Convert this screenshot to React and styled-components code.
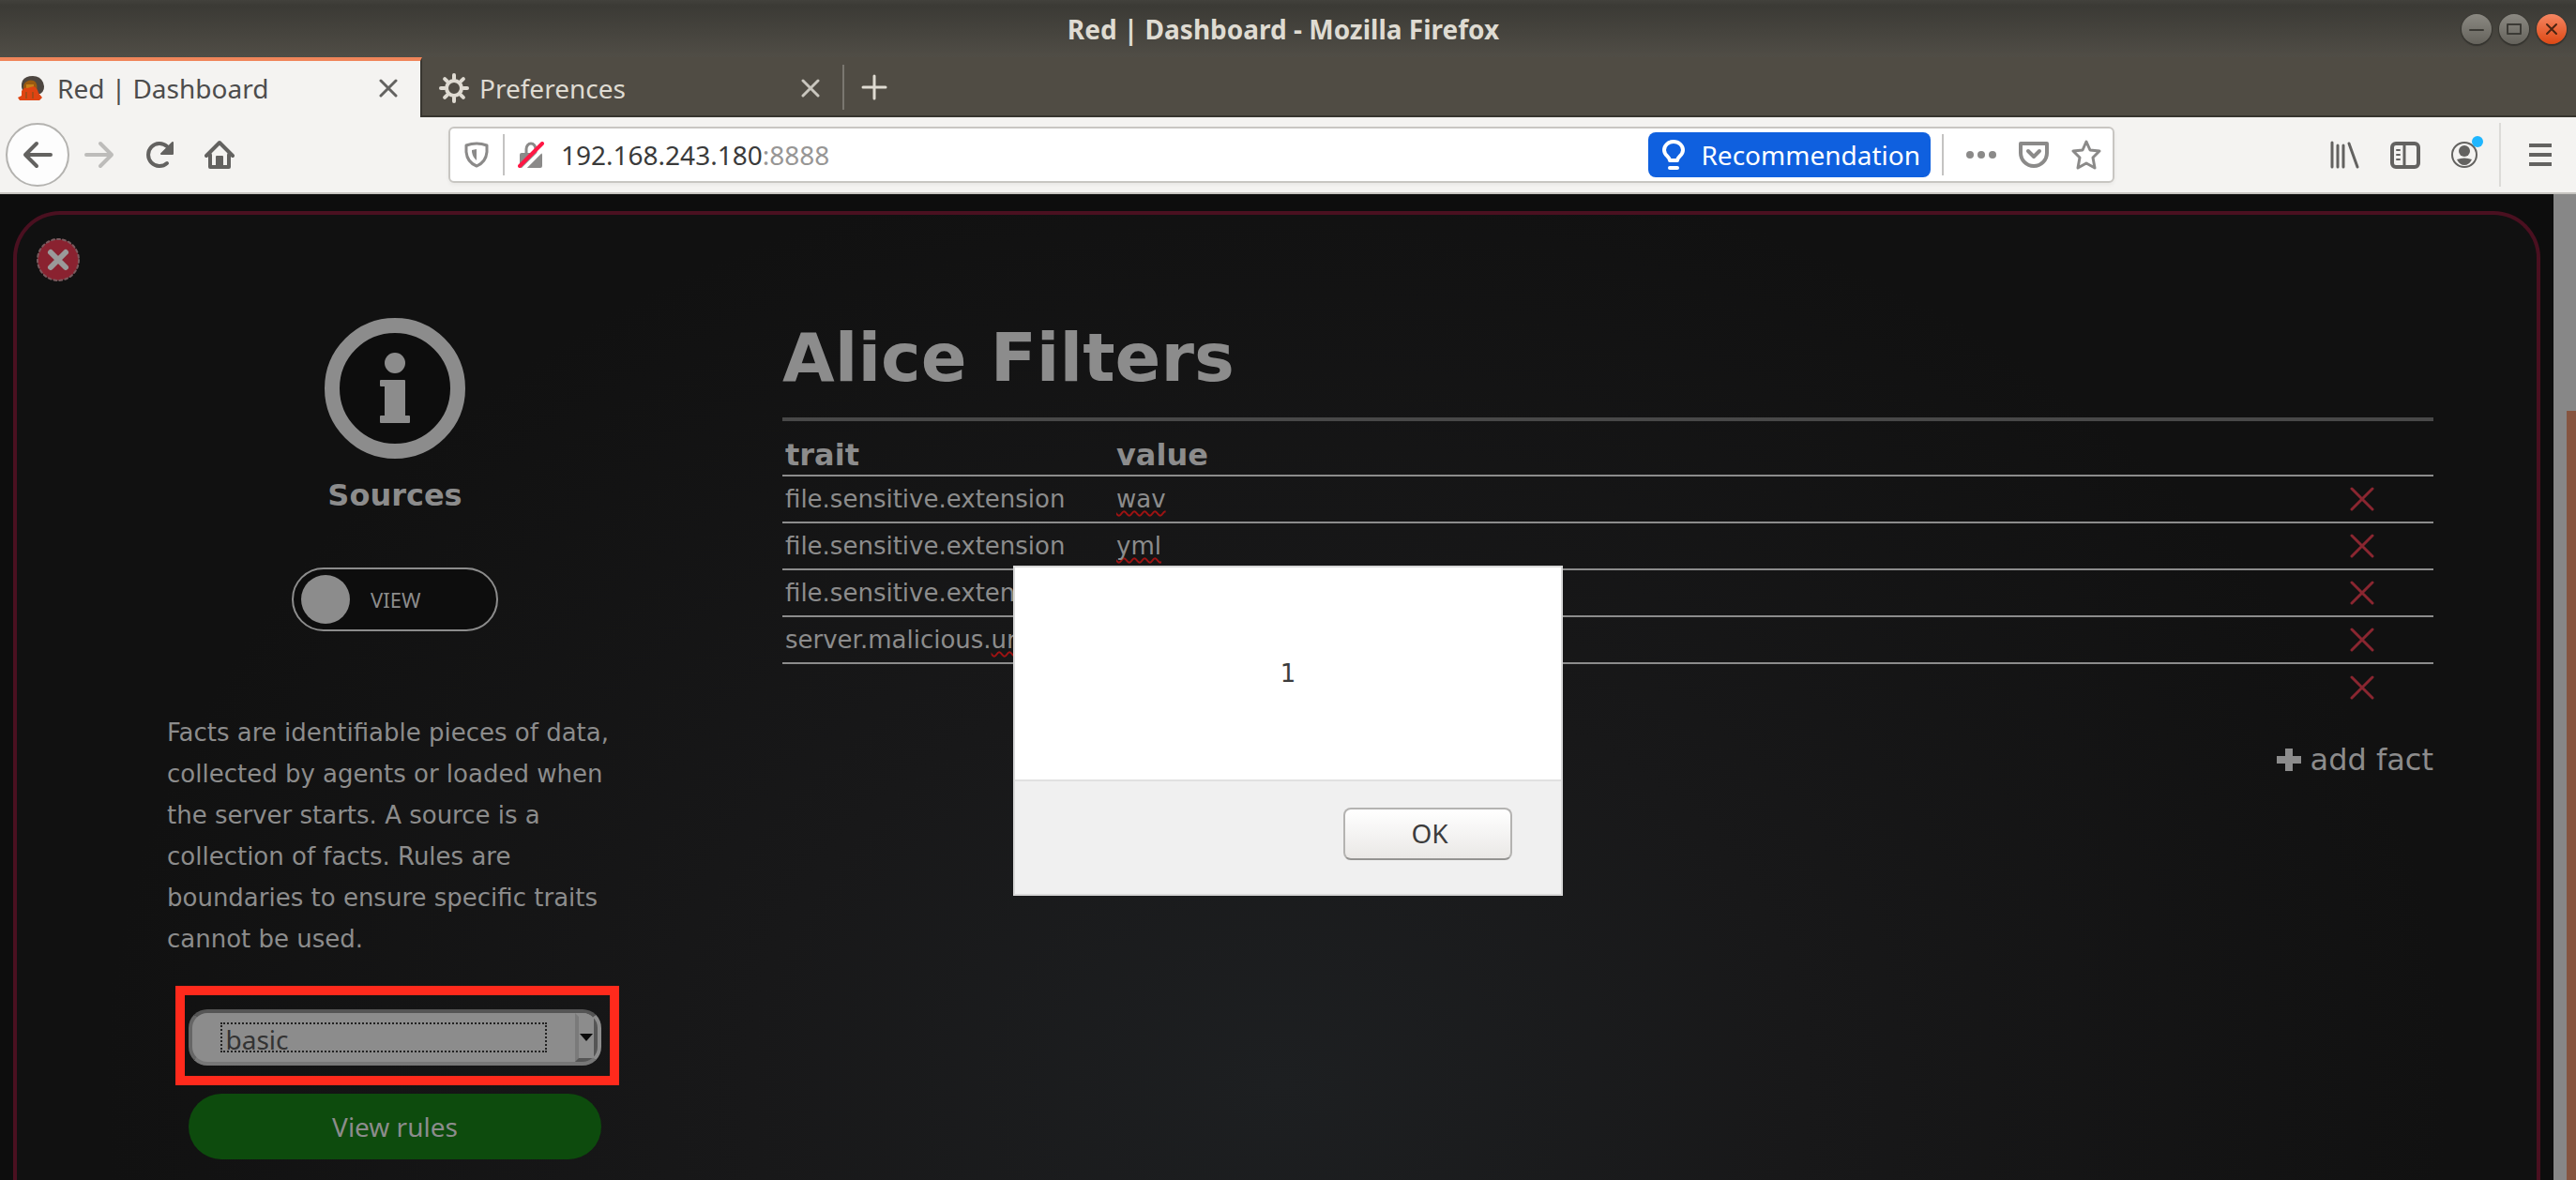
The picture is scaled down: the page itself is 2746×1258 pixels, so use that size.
import React from 'react';
import styled, { createGlobalStyle } from 'styled-components';

const ui = '"Noto Sans", "Open Sans", sans-serif';
const body = '"DejaVu Sans", sans-serif';

const GlobalStyle = createGlobalStyle`
  * { box-sizing: border-box; }
  body { margin: 0; background: #0d0d0d; }
  button, select { font: inherit; color: inherit; }
  button { padding: 0; border: 0; background: none; }
`;

const Window = styled.div`
  display: flex;
  flex-direction: column;
  height: 100vh;
  overflow: hidden;
  font-family: ${ui};
`;

const TitleBar = styled.header`
  flex: none;
  display: grid;
  grid-template-columns: 1fr auto 1fr;
  align-items: center;
  height: 61px;
  padding-right: 10px;
  background: linear-gradient(#42413c, #3b3a35 6px, #504d46);
  color: #dfdbd2;
  font-size: 28px;
  font-weight: 700;
`;

const WindowTitle = styled.span`
  grid-column: 2;
`;

const WindowButtons = styled.div`
  display: flex;
  justify-content: flex-end;
  gap: 8px;
`;

const WindowButton = styled.button`
  display: flex;
  width: 32px;
  height: 32px;
  border-radius: 50%;
  background: ${(p) => (p.$close ? 'linear-gradient(#f58662, #dd4814)' : 'linear-gradient(#8b8982, #65635c)')};
  box-shadow: 0 1px 1px 1px #35342f;
  color: ${(p) => (p.$close ? '#4a2412' : '#3b3a35')};
`;

const TabStrip = styled.nav`
  flex: none;
  display: flex;
  height: 64px;
  background: #504c44;
  box-shadow: inset 0 -2px #37352f;
`;

const Tab = styled.div`
  display: flex;
  align-items: center;
  width: ${(p) => (p.$active ? '450px' : '448px')};
  padding: 0 24px 2px 18px;
  font-size: 28px;
  line-height: 36px;
  color: ${(p) => (p.$active ? '#4c4c4c' : '#dfdbd2')};
  background: ${(p) => (p.$active ? '#f4f3f1' : 'none')};
  border-top: 4px solid ${(p) => (p.$active ? '#f0855a' : 'transparent')};
  border-right: ${(p) => (p.$active ? '2px solid #37352f' : '0')};
`;

const TabLabel = styled.span`
  flex: 1;
  padding-left: 11px;
`;

const IconButton = styled.button`
  display: flex;
  color: ${(p) => p.$color || '#636260'};
`;

const NewTab = styled.button`
  display: flex;
  align-items: center;
  align-self: center;
  height: 48px;
  padding-left: 18px;
  border-left: 2px solid #7a7770;
  color: #dfdbd2;
`;

const Toolbar = styled.div`
  flex: none;
  display: flex;
  align-items: center;
  height: 82px;
  padding: 0 26px 0 6px;
  background: #f4f3f1;
  border-bottom: 2px solid #c6c4c0;
`;

const NavGroup = styled.div`
  flex: none;
  display: flex;
  align-items: center;
  width: 472px;
  gap: 32px;
`;

const BackButton = styled.button`
  display: flex;
  align-items: center;
  justify-content: center;
  width: 68px;
  height: 68px;
  margin-right: -16px;
  border: 2px solid #b4b3b0;
  border-radius: 50%;
  background: #fdfdfd;
  color: #636260;
`;

const AddressBar = styled.div`
  flex: 0 1 1776px;
  display: flex;
  align-items: center;
  height: 60px;
  padding: 0 12px 0 14px;
  border: 2px solid #c8c6c2;
  border-radius: 6px;
  background: #fff;
  box-shadow: 0 2px 4px #0000000d;
  color: #8b8a89;
`;

const Address = styled.span`
  flex: 1;
  padding-left: 18px;
  font-size: 28px;
  color: #979695;
`;

const Host = styled.span`
  color: #3a3a3a;
`;

const Divider = styled.span`
  width: 2px;
  height: ${(p) => (p.$tall ? '68px' : '44px')};
  margin: ${(p) => p.$margin || '0 14px'};
  background: ${(p) => (p.$tall ? '#dcdbd8' : '#c4c3c2')};
`;

const Recommendation = styled.button`
  display: flex;
  align-items: center;
  gap: 16px;
  height: 48px;
  padding: 0 11px 0 14px;
  border-radius: 8px;
  background: #0f60df;
  color: #fff;
  font-size: 28px;
`;

const PageActions = styled.div`
  display: flex;
  align-items: center;
  gap: 24px;
  margin-left: 10px;
`;

const ToolGroup = styled.div`
  display: flex;
  align-items: center;
  gap: 32px;
  margin-left: auto;
`;

const Viewport = styled.div`
  flex: 1;
  min-height: 0;
  display: flex;
  overflow: hidden;
  background: #0d0d0d;
`;

const Scrollbar = styled.div`
  flex: none;
  display: flex;
  justify-content: flex-end;
  align-items: flex-end;
  width: 24px;
  background: #878787;
`;

const ScrollThumb = styled.div`
  width: 10px;
  height: 78%;
  background: #865540;
`;

const Panel = styled.main`
  flex: 1;
  display: flex;
  align-items: flex-start;
  margin: 18px 14px 0;
  padding: 24px 110px 0 20px;
  border: 4px solid #4a1020;
  border-bottom: 0;
  border-radius: 50px 50px 0 0;
  background: radial-gradient(ellipse 1250px 1000px at 50% 90%, #1d1f21, #181819 45%, #111 100%);
  color: #8c8c8c;
  font-family: ${body};
`;

const CloseButton = styled.button`
  display: flex;
  margin-right: 90px;
`;

const Sidebar = styled.section`
  flex: none;
  display: flex;
  flex-direction: column;
  align-items: center;
  width: 490px;
  padding-top: 86px;
`;

const SidebarTitle = styled.h2`
  margin: 20px 0 0;
  font-size: 32px;
  line-height: 38px;
`;

const Switch = styled.label`
  display: flex;
  align-items: center;
  gap: 22px;
  width: 220px;
  height: 68px;
  margin-top: 58px;
  padding-left: 8px;
  border: 2px solid #8c8c8c;
  border-radius: 34px;
  background: #0d0d0d;
  font-family: ${ui};
  font-size: 22px;
`;

const SwitchInput = styled.input`
  appearance: none;
  width: 52px;
  height: 52px;
  margin: 0;
  border-radius: 50%;
  background: #8c8c8c;
`;

const Description = styled.p`
  width: 486px;
  margin: 86px 0 0;
  font-size: 26px;
  line-height: 44px;
`;

const Highlight = styled.div`
  width: 473px;
  height: 106px;
  margin: 28px 0 9px 4px;
  padding: 15px 9px 0 4px;
  border: 10px solid #ff2a1c;
`;

const SelectFrame = styled.div`
  display: flex;
  align-items: center;
  width: 440px;
  height: 60px;
  padding-left: 30px;
  overflow: hidden;
  border: 4px solid;
  border-color: #555 #8c8c8c #777 #666;
  border-radius: 20px;
  background: #8c8c8c;
`;

const SourceSelect = styled.select`
  appearance: none;
  width: 348px;
  height: 32px;
  padding: 4px 6px 0;
  border: 0;
  outline: 2px dotted #222;
  outline-offset: -2px;
  background: none;
  color: #333;
  font-family: ${ui};
  font-size: 28px;
  line-height: 28px;
`;

const SelectArrow = styled.span`
  display: flex;
  align-items: center;
  justify-content: center;
  width: 24px;
  height: 52px;
  margin-left: auto;
  border: 4px solid;
  border-color: #8c8c8c #555 #555 #7a7a7a;
`;

const RulesButton = styled.button`
  width: 440px;
  height: 70px;
  border-radius: 35px;
  background: #0d4b0d;
  font-family: ${ui};
  font-size: 28px;
`;

const Filters = styled.section`
  flex: 1;
  padding-top: 84px;
  margin-left: 168px;
`;

const Heading = styled.h1`
  margin: 0;
  padding-bottom: 20px;
  border-bottom: 4px solid #484848;
  font-size: 72px;
  line-height: 88px;
`;

const FactTable = styled.table`
  width: 100%;
  margin-top: 14px;
  border-collapse: collapse;
  table-layout: fixed;
  font-size: 26px;

  tr { height: 50px; border-bottom: 2px solid #8c8c8c; }
  thead tr { height: 44px; }
  tbody tr:last-child { border: 0; }
  th, td { padding: 0 3px; text-align: left; }
  th { font-size: 32px; }
`;

const Col = styled.col`
  width: ${(p) => p.$w};
`;

const Misspelt = styled.span`
  text-decoration: underline wavy #a01212 2px;
  text-underline-offset: 3px;
  text-decoration-skip-ink: none;
`;

const RemoveButton = styled.button`
  display: flex;
  margin: 0 auto;
  color: #8a2630;
`;

const AddFact = styled.button`
  display: flex;
  align-items: center;
  gap: 10px;
  margin: 34px 0 0 auto;
  font-size: 32px;
  line-height: 38px;
`;

const Dialog = styled.div`
  position: fixed;
  top: 603px;
  left: 50%;
  width: 586px;
  transform: translateX(-50%);
  border: 2px solid #d8d8d8;
  background: #fff;
  color: #3c3c3c;
`;

const DialogText = styled.p`
  display: flex;
  align-items: center;
  justify-content: center;
  height: 226px;
  margin: 0;
  font-family: ${body};
  font-size: 26px;
`;

const DialogFooter = styled.div`
  display: flex;
  justify-content: flex-end;
  height: 122px;
  padding: 28px 52px 0 0;
  border-top: 2px solid #e1e1e1;
  background: #f0f0f0;
`;

const OkButton = styled.button`
  width: 180px;
  height: 56px;
  padding: 0 0 2px 4px;
  border: 2px solid #b4b3b1;
  border-bottom-color: #949391;
  border-radius: 8px;
  background: linear-gradient(#fff, #eae8e6);
  font-size: 28px;
`;

const Icon = ({ size = 32, h, sw = 4, children, ...rest }) => (
  <svg
    width={size}
    height={h || size}
    viewBox={`0 0 ${size} ${h || size}`}
    fill="none"
    stroke="currentColor"
    strokeWidth={sw}
    strokeLinecap="round"
    strokeLinejoin="round"
    aria-hidden="true"
    {...rest}
  >
    {children}
  </svg>
);

const CrossIcon = ({ size = 20, sw = 3 }) => (
  <Icon size={size} sw={sw}>
    <path d={`M2 2L${size - 2} ${size - 2}M${size - 2} 2L2 ${size - 2}`} />
  </Icon>
);

const Favicon = () => (
  <Icon size={32} h={28} sw="0">
    <path d="M6 6Q9 1 17 1Q25 1 28 8Q31 16 25 20H8Q3 12 6 6Z" fill="#4d4640" />
    <path d="M8 9Q12 4 18 6Q23 9 21 17L8 18Q6 13 8 9Z" fill="#9a5a10" />
    <path d="M10 10H18V14H10Z" fill="#c98018" />
    <path d="M5 17Q8 12 11 14L18 12Q22 14 23 19L27 24L24 27H3L1 24L5 22Z" fill="#df4412" />
    <path d="M9 18H11V25H9ZM16 18H18V25H16Z" fill="#a84a18" />
  </Icon>
);

const GearIcon = () => (
  <Icon size={32} sw="4">
    <circle cx="16" cy="16" r="8" />
    {[0, 45, 90, 135, 180, 225, 270, 315].map((a) => (
      <path key={a} d="M16 6V2" transform={`rotate(${a} 16 16)`} />
    ))}
  </Icon>
);

const rows = [
  { trait: 'file.sensitive.extension', value: 'wav' },
  { trait: 'file.sensitive.extension', value: 'yml' },
  { trait: 'file.sensitive.extension', value: '' },
  { trait: 'server.malicious.', misspelt: 'url', value: '' },
  { trait: '', value: '' },
];

export default function App() {
  return (
    <Window>
      <GlobalStyle />
      <TitleBar>
        <WindowTitle>Red | Dashboard - Mozilla Firefox</WindowTitle>
        <WindowButtons>
          <WindowButton aria-label="Minimize"><Icon sw="2"><path d="M9 17H23" /></Icon></WindowButton>
          <WindowButton aria-label="Maximize"><Icon sw="2"><path d="M9 11H23V21H9Z" /></Icon></WindowButton>
          <WindowButton $close aria-label="Close"><Icon sw="2"><path d="M11 11L21 21M21 11L11 21" /></Icon></WindowButton>
        </WindowButtons>
      </TitleBar>

      <TabStrip>
        <Tab $active>
          <Favicon />
          <TabLabel>Red | Dashboard</TabLabel>
          <IconButton aria-label="Close tab"><CrossIcon /></IconButton>
        </Tab>
        <Tab>
          <GearIcon />
          <TabLabel>Preferences</TabLabel>
          <IconButton $color="#c9c6be" aria-label="Close tab"><CrossIcon /></IconButton>
        </Tab>
        <NewTab aria-label="New tab"><Icon size={28} sw="3"><path d="M14 2V26M2 14H26" /></Icon></NewTab>
      </TabStrip>

      <Toolbar>
        <NavGroup>
          <BackButton aria-label="Back"><Icon><path d="M30 16H3M15 4L3 16L15 28" /></Icon></BackButton>
          <IconButton $color="#bdbcba" aria-label="Forward"><Icon><path d="M2 16H29M17 4L29 16L17 28" /></Icon></IconButton>
          <IconButton aria-label="Reload">
            <Icon>
              <path d="M24 25A12 12 0 1 1 24 7" />
              <path d="M30 3V15H18Z" fill="currentColor" strokeWidth="2" />
            </Icon>
          </IconButton>
          <IconButton aria-label="Home">
            <Icon>
              <path d="M2 17L16 3L30 17M6 16V29H26V16" />
              <path d="M13 28V18H19V28Z" fill="currentColor" strokeWidth="2" />
            </Icon>
          </IconButton>
        </NavGroup>

        <AddressBar>
          <Icon size={28} sw="3">
            <path d="M3 4Q14 0 25 4V11Q24 22 14 26Q4 22 3 11Z" />
            <path d="M14 8V20Q10 17 9 11V9Z" fill="currentColor" strokeWidth="0" />
          </Icon>
          <Divider />
          <Icon size={28} sw="4">
            <path d="M9 13V8A5 6 0 0 1 19 8V13" strokeWidth="3" />
            <path d="M4 14H24V26H4Z" fill="currentColor" />
            <path d="M6 29L30 5" stroke="#fff" strokeWidth="4" />
            <path d="M2 26L26 2" stroke="#ff1744" strokeWidth="4" />
          </Icon>
          <Address><Host>192.168.243.180</Host>:8888</Address>
          <Recommendation>
            <Icon size={26} h={32} sw="4"><path d="M9 22C9 18 3 17 3 11A10 9 0 0 1 23 11C23 17 17 18 17 22Z" /><path d="M9 30H17" /></Icon>
            Recommendation
          </Recommendation>
          <Divider $margin="0 14px 0 12px" />
          <PageActions>
            <IconButton $color="#8b8a89" aria-label="Page actions">
              <Icon sw="0">
                <circle cx="4" cy="16" r="4" fill="currentColor" />
                <circle cx="16" cy="16" r="4" fill="currentColor" />
                <circle cx="28" cy="16" r="4" fill="currentColor" />
              </Icon>
            </IconButton>
            <IconButton $color="#8b8a89" aria-label="Save to Pocket">
              <Icon><path d="M2 4H30V14A14 14 0 0 1 2 14Z" /><path d="M10 12L16 18L22 12" /></Icon>
            </IconButton>
            <IconButton $color="#8b8a89" aria-label="Bookmark">
              <Icon sw="3"><path d="M16 2L20 11L30 12L23 19L25 30L16 25L7 30L9 19L2 12L12 11Z" /></Icon>
            </IconButton>
          </PageActions>
        </AddressBar>

        <ToolGroup>
          <IconButton aria-label="Library">
            <Icon sw="3"><path d="M2 3V29M8 6V29M14 6V29M20 4L29 29" /></Icon>
          </IconButton>
          <IconButton aria-label="Sidebars">
            <Icon><rect x="2" y="4" width="28" height="25" rx="4" /><path d="M15 4V28" strokeWidth="3" /><path d="M7 11H10M7 16H10M7 21H10" strokeWidth="2" /></Icon>
          </IconButton>
          <IconButton aria-label="Account">
            <Icon size={36} h={44}>
              <circle cx="15" cy="22" r="13" strokeWidth="2" />
              <circle cx="15" cy="18" r="6" fill="currentColor" strokeWidth="0" />
              <path d="M7 27Q15 24 23 27Q20 33 15 33Q10 33 7 27Z" fill="currentColor" strokeWidth="0" />
              <circle cx="29" cy="8" r="6" fill="#1fb6ff" strokeWidth="0" />
            </Icon>
          </IconButton>
        </ToolGroup>
        <Divider $tall $margin="0 30px 0 16px" />
        <IconButton aria-label="Open menu">
          <Icon size={24} sw="4" strokeLinecap="butt"><path d="M0 2H24M0 12H24M0 22H24" /></Icon>
        </IconButton>
      </Toolbar>

      <Viewport>
        <Panel>
          <CloseButton aria-label="Close panel">
            <Icon size={48}>
              <circle cx="24" cy="24" r="22" fill="#8a2230" stroke="#7a5a5e" strokeWidth="2" strokeDasharray="3 3" />
              <path d="M16 16L32 32M32 16L16 32" stroke="#9a9a9a" strokeWidth="6" />
            </Icon>
          </CloseButton>

          <Sidebar>
            <Icon size={150}>
              <circle cx="75" cy="75" r="67" fill="#0d0d0d" strokeWidth="16" />
              <circle cx="75" cy="48" r="11" fill="currentColor" strokeWidth="0" />
              <path d="M60 67H85V105H90V111H60V105H65V72H60Z" fill="currentColor" strokeWidth="2" />
            </Icon>
            <SidebarTitle>Sources</SidebarTitle>
            <Switch>
              <SwitchInput type="checkbox" />
              VIEW
            </Switch>
            <Description>
              Facts are identifiable pieces of data, collected by agents or loaded when the server starts. A source is a
              collection of facts. Rules are boundaries to ensure specific traits cannot be used.
            </Description>
            <Highlight>
              <SelectFrame>
                <SourceSelect aria-label="Source" defaultValue="basic"><option>basic</option></SourceSelect>
                <SelectArrow><Icon size={14} h={8} sw="0"><path d="M0 0H14L7 8Z" fill="#0a0a0a" /></Icon></SelectArrow>
              </SelectFrame>
            </Highlight>
            <RulesButton>View rules</RulesButton>
          </Sidebar>

          <Filters>
            <Heading>Alice Filters</Heading>
            <FactTable>
              <colgroup><Col $w="353px" /><Col /><Col $w="152px" /></colgroup>
              <thead><tr><th>trait</th><th>value</th><th aria-label="remove" /></tr></thead>
              <tbody>
                {rows.map((r, i) => (
                  <tr key={i}>
                    <td>{r.trait}{r.misspelt && <Misspelt>{r.misspelt}</Misspelt>}</td>
                    <td><Misspelt>{r.value}</Misspelt></td>
                    <td><RemoveButton aria-label="Remove fact"><CrossIcon size={26} /></RemoveButton></td>
                  </tr>
                ))}
              </tbody>
            </FactTable>
            <AddFact>
              <Icon size={26} sw="8" strokeLinecap="butt"><path d="M13 1V25M0 13H26" /></Icon>
              add fact
            </AddFact>
          </Filters>
        </Panel>
        <Scrollbar><ScrollThumb /></Scrollbar>
      </Viewport>

      <Dialog role="dialog" aria-label="Alert">
        <DialogText>1</DialogText>
        <DialogFooter><OkButton>OK</OkButton></DialogFooter>
      </Dialog>
    </Window>
  );
}
